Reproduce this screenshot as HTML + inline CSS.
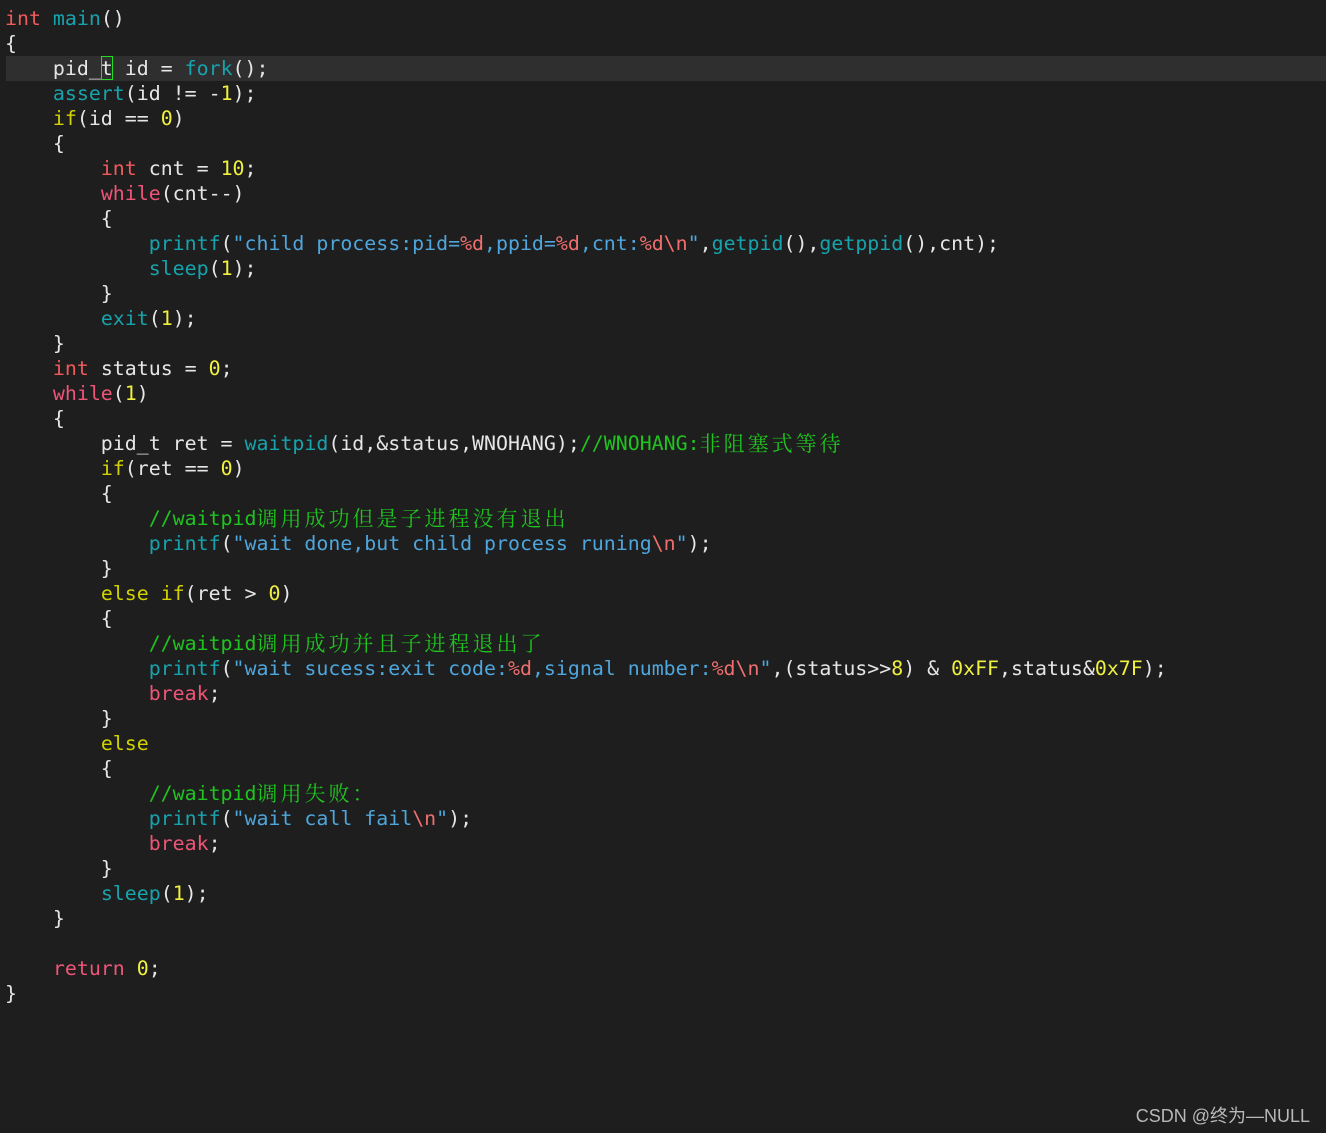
<!DOCTYPE html>
<html><head><meta charset="utf-8"><style>
html,body{margin:0;padding:0;background:#1e1e1e;width:1326px;height:1133px;overflow:hidden}
pre{margin:0;position:absolute;left:5px;top:6px;font-family:"DejaVu Sans Mono","Liberation Mono",monospace;font-size:19.9px;line-height:25px;color:#e6e6e6}
.hl{position:absolute;left:6px;top:56px;width:1320px;height:25px;background:#2f2f2f}
.cur{position:absolute;left:101px;top:56px;width:10px;height:22px;border:1px solid #22dd22}
.k{color:#f05a5a}.f{color:#17a3ad}.n{color:#f0f040}.y{color:#d2d200}.p{color:#ee5577}.s{color:#4ea6dc}.c{color:#1fc41f}.e{color:#ef6f6f}
.z{font-family:"Noto Serif CJK SC","WenQuanYi Zen Hei",serif;font-size:21px;letter-spacing:3px;display:inline-block;height:25px;line-height:25px;vertical-align:top;overflow:hidden}
.wm{position:absolute;right:16px;top:1102px;font-family:"Liberation Sans","Noto Sans CJK SC",sans-serif;font-size:18px;color:#b8b8b8}
</style></head><body>
<div class="hl"></div><div class="cur"></div>
<pre><span class="k">int</span> <span class="f">main</span>()
{
    pid_t id = <span class="f">fork</span>();
    <span class="f">assert</span>(id != -<span class="n">1</span>);
    <span class="y">if</span>(id == <span class="n">0</span>)
    {
        <span class="k">int</span> cnt = <span class="n">10</span>;
        <span class="p">while</span>(cnt--)
        {
            <span class="f">printf</span>(<span class="s">"child process:pid=<span class="e">%d</span>,ppid=<span class="e">%d</span>,cnt:<span class="e">%d\n</span>"</span>,<span class="f">getpid</span>(),<span class="f">getppid</span>(),cnt);
            <span class="f">sleep</span>(<span class="n">1</span>);
        }
        <span class="f">exit</span>(<span class="n">1</span>);
    }
    <span class="k">int</span> status = <span class="n">0</span>;
    <span class="p">while</span>(<span class="n">1</span>)
    {
        pid_t ret = <span class="f">waitpid</span>(id,&amp;status,WNOHANG);<span class="c">//WNOHANG:<span class="z">非阻塞式等待</span></span>
        <span class="y">if</span>(ret == <span class="n">0</span>)
        {
            <span class="c">//waitpid<span class="z">调用成功但是子进程没有退出</span></span>
            <span class="f">printf</span>(<span class="s">"wait done,but child process runing<span class="e">\n</span>"</span>);
        }
        <span class="y">else</span> <span class="y">if</span>(ret &gt; <span class="n">0</span>)
        {
            <span class="c">//waitpid<span class="z">调用成功并且子进程退出了</span></span>
            <span class="f">printf</span>(<span class="s">"wait sucess:exit code:<span class="e">%d</span>,signal number:<span class="e">%d\n</span>"</span>,(status&gt;&gt;<span class="n">8</span>) &amp; <span class="n">0xFF</span>,status&amp;<span class="n">0x7F</span>);
            <span class="p">break</span>;
        }
        <span class="y">else</span>
        {
            <span class="c">//waitpid<span class="z">调用失败：</span></span>
            <span class="f">printf</span>(<span class="s">"wait call fail<span class="e">\n</span>"</span>);
            <span class="p">break</span>;
        }
        <span class="f">sleep</span>(<span class="n">1</span>);
    }

    <span class="p">return</span> <span class="n">0</span>;
}</pre>
<div class="wm">CSDN @终为—NULL</div>
</body></html>
